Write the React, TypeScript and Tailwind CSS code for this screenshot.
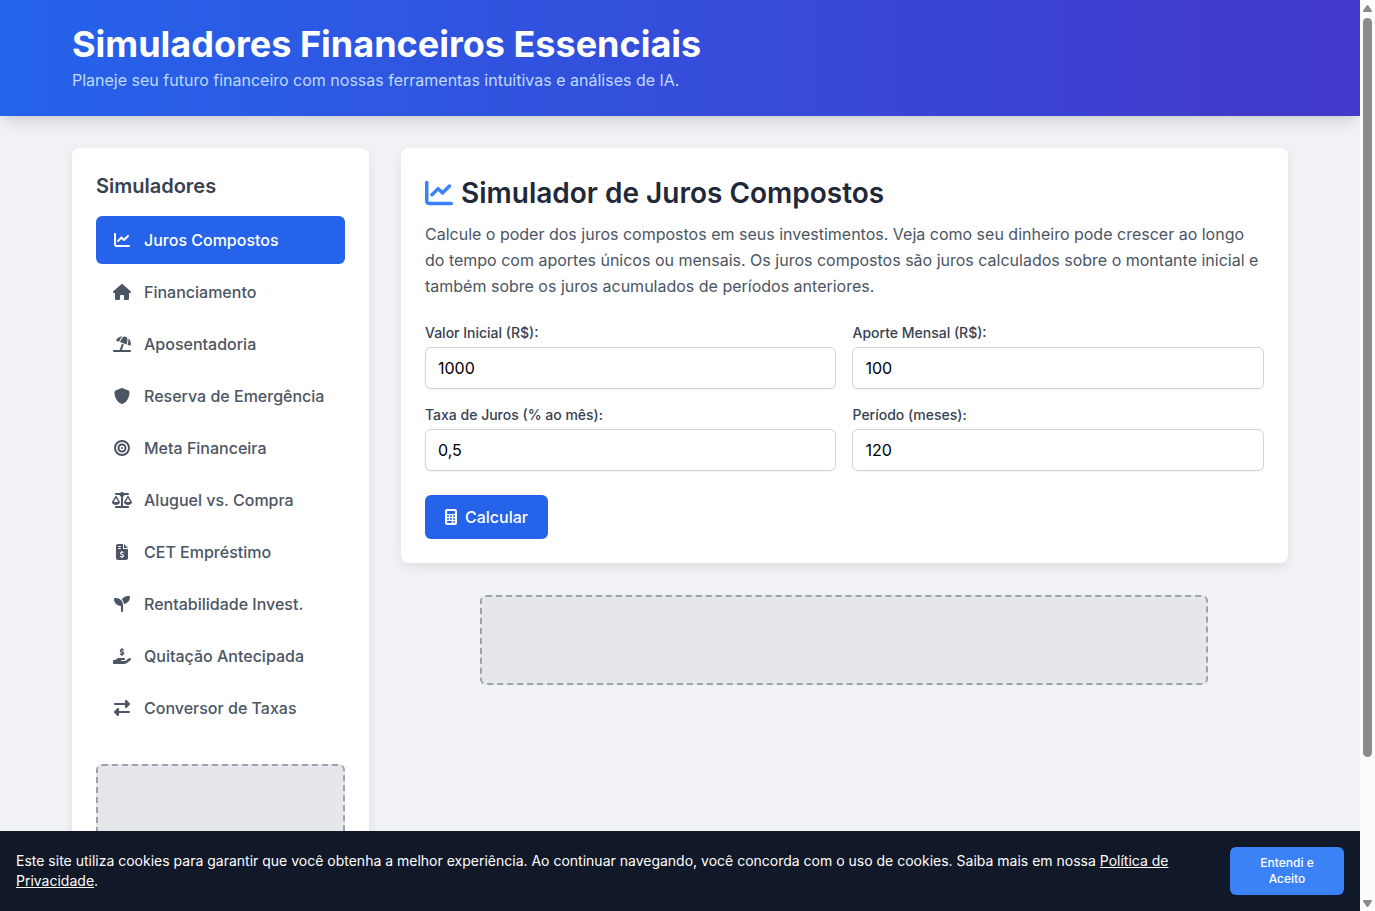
import React, { useState } from 'react';
import type { IconType } from 'react-icons';
import {
  FaBullseye,
  FaCalculator,
  FaChartLine,
  FaFileInvoiceDollar,
  FaHandHoldingDollar,
  FaHouse,
  FaRightLeft,
  FaScaleBalanced,
  FaSeedling,
  FaShield,
  FaUmbrellaBeach,
} from 'react-icons/fa6';

const simulators: { name: string; icon: IconType }[] = [
  { name: 'Juros Compostos', icon: FaChartLine },
  { name: 'Financiamento', icon: FaHouse },
  { name: 'Aposentadoria', icon: FaUmbrellaBeach },
  { name: 'Reserva de Emergência', icon: FaShield },
  { name: 'Meta Financeira', icon: FaBullseye },
  { name: 'Aluguel vs. Compra', icon: FaScaleBalanced },
  { name: 'CET Empréstimo', icon: FaFileInvoiceDollar },
  { name: 'Rentabilidade Invest.', icon: FaSeedling },
  { name: 'Quitação Antecipada', icon: FaHandHoldingDollar },
  { name: 'Conversor de Taxas', icon: FaRightLeft },
];

const fields = [
  { id: 'valor-inicial', label: 'Valor Inicial (R$):', value: '1000' },
  { id: 'aporte-mensal', label: 'Aporte Mensal (R$):', value: '100' },
  { id: 'taxa-juros', label: 'Taxa de Juros (% ao mês):', value: '0,5' },
  { id: 'periodo', label: 'Período (meses):', value: '120' },
];

const Header = () => (
  <header className="relative bg-linear-to-r/srgb from-[#2563eb] to-[#4338ca] py-6 shadow-lg">
    <div className="mx-auto max-w-7xl px-8">
      <h1 className="text-4xl font-bold text-white">
        Simuladores Financeiros Essenciais
      </h1>
      <p className="mt-1 text-[#bfdbfe]">
        Planeje seu futuro financeiro com nossas ferramentas intuitivas e
        análises de IA.
      </p>
    </div>
  </header>
);

const Sidebar = () => {
  const [active, setActive] = useState('Juros Compostos');

  return (
    <aside className="w-1/4 rounded-lg bg-white p-6 shadow-[0_4px_12px_rgba(0,0,0,0.08)]">
      <h2 className="mb-4 text-xl font-semibold text-[#374151]">Simuladores</h2>
      <nav className="flex flex-col gap-1">
        {simulators.map(({ name, icon: Icon }) => (
          <button
            key={name}
            type="button"
            onClick={() => setActive(name)}
            className={
              name === active
                ? 'flex items-center gap-3 rounded-md bg-[#2563eb] px-4 py-3 text-left font-medium text-white'
                : 'flex items-center gap-3 rounded-md px-4 py-3 text-left font-medium text-[#4b5563]'
            }
          >
            <Icon className="h-4 w-5 shrink-0" />
            <span className="whitespace-nowrap">{name}</span>
          </button>
        ))}
      </nav>
      <div className="mt-8 h-[250px] rounded-md border-2 border-dashed border-[#9ca3af] bg-[#e5e7eb]" />
    </aside>
  );
};

const CompoundInterest = () => (
  <div className="rounded-lg bg-white p-6 shadow-[0_4px_12px_rgba(0,0,0,0.08)]">
    <h2 className="mb-[7px] flex items-center gap-2 text-[28px] leading-[42px] font-semibold text-[#1f2937]">
      <FaChartLine className="size-7 text-[#3b82f6]" />
      Simulador de Juros Compostos
    </h2>
    <p className="mb-6 leading-[26px] text-[#4b5563]">
      Calcule o poder dos juros compostos em seus investimentos. Veja como seu
      dinheiro pode crescer ao longo do tempo com aportes únicos ou mensais. Os
      juros compostos são juros calculados sobre o montante inicial e também
      sobre os juros acumulados de períodos anteriores.
    </p>
    <form onSubmit={(e) => e.preventDefault()}>
      <div className="grid grid-cols-2 gap-4">
        {fields.map((field) => (
          <div key={field.id}>
            <label
              htmlFor={field.id}
              className="mb-1 block text-sm font-medium text-[#374151]"
            >
              {field.label}
            </label>
            <input
              id={field.id}
              type="text"
              defaultValue={field.value}
              className="block w-full rounded-md border border-[#d1d5db] bg-white px-3 py-2 text-black shadow-xs"
            />
          </div>
        ))}
      </div>
      <button
        type="submit"
        className="mt-6 flex items-center gap-2 rounded-md bg-[#2563eb] px-5 py-2.5 font-medium text-white"
      >
        <FaCalculator className="h-4 w-3" />
        Calcular
      </button>
    </form>
  </div>
);

const CookieBar = () => (
  <div className="relative flex shrink-0 items-center justify-between gap-4 bg-[#111827] p-4 text-sm text-white">
    <p>
      Este site utiliza cookies para garantir que você obtenha a melhor
      experiência. Ao continuar navegando, você concorda com o uso de cookies.
      Saiba mais em nossa{' '}
      <a href="#privacidade" className="underline">
        Política de Privacidade
      </a>
      .
    </p>
    <button
      type="button"
      className="w-[114px] shrink-0 rounded-md bg-[#3b82f6] px-6 py-2 text-xs font-medium"
    >
      Entendi e Aceito
    </button>
  </div>
);

const ScrollRail = () => (
  <div className="flex w-[15px] shrink-0 flex-col items-center bg-[#fcfcfc] pt-[5px] pb-1">
    <svg width="9" height="7" viewBox="0 0 9 7" fill="#8b8b8b">
      <path d="M4.5 0 Q5 0 5.4 .5 L8.8 5.5 Q9.2 7 8 7 H1 Q-.2 7 .2 5.5 L3.6 .5 Q4 0 4.5 0Z" />
    </svg>
    <div className="mt-1.5 h-[739px] w-[9px] rounded-full bg-[#8b8b8b]" />
    <svg className="mt-auto" width="9" height="7" viewBox="0 0 9 7" fill="#8b8b8b">
      <path d="M4.5 7 Q5 7 5.4 6.5 L8.8 1.5 Q9.2 0 8 0 H1 Q-.2 0 .2 1.5 L3.6 6.5 Q4 7 4.5 7Z" />
    </svg>
  </div>
);

const App = () => {
  return (
    <div className="flex h-screen bg-[#f0f2f5] font-[Inter,sans-serif]">
      <div className="flex min-w-0 flex-1 flex-col">
        <div className="min-h-0 flex-1 overflow-hidden">
          <Header />
          <main className="mx-auto flex max-w-7xl gap-8 p-8">
            <Sidebar />
            <section className="w-3/4">
              <CompoundInterest />
              <div className="mx-auto mt-8 h-[90px] max-w-[728px] rounded-md border-2 border-dashed border-[#9ca3af] bg-[#e5e7eb]" />
            </section>
          </main>
        </div>
        <CookieBar />
      </div>
      <ScrollRail />
    </div>
  );
};

export default App;
